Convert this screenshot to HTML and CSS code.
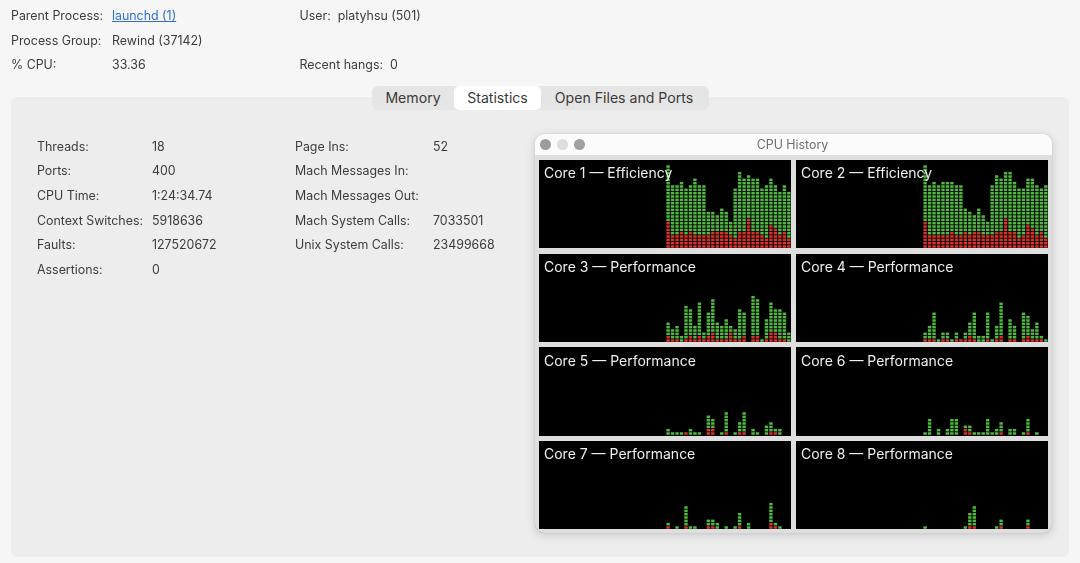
FILE: index.html
```html
<!DOCTYPE html>
<html lang="en">
<head>
<meta charset="utf-8">
<title>Activity Monitor</title>
<link rel="stylesheet" href="styles.css">
</head>
<body>
<div class="page">
  <header class="info">
    <span>Parent Process:</span><a class="link" href="#">launchd (1)</a><span class="pair">User:<b>platyhsu (501)</b></span>
    <span>Process Group:</span><span>Rewind (37142)</span><span></span>
    <span>% CPU:</span><span>33.36</span><span class="pair">Recent hangs:<b>0</b></span>
  </header>
  <main class="panel">
    <nav class="tabs">
      <span class="tab tab-memory">Memory</span>
      <span class="tab tab-active">Statistics</span>
      <span class="tab tab-files">Open Files and Ports</span>
    </nav>
    <div class="content">
      <div class="stats">
        <dl class="stat-col stat-col-a">
          <dt>Threads:</dt><dd>18</dd>
          <dt>Ports:</dt><dd>400</dd>
          <dt>CPU Time:</dt><dd>1:24:34.74</dd>
          <dt>Context Switches:</dt><dd>5918636</dd>
          <dt>Faults:</dt><dd>127520672</dd>
          <dt>Assertions:</dt><dd>0</dd>
        </dl>
        <dl class="stat-col stat-col-b">
          <dt>Page Ins:</dt><dd>52</dd>
          <dt>Mach Messages In:</dt><dd></dd>
          <dt>Mach Messages Out:</dt><dd></dd>
          <dt>Mach System Calls:</dt><dd>7033501</dd>
          <dt>Unix System Calls:</dt><dd>23499668</dd>
        </dl>
      </div>
      <section class="window">
        <div class="titlebar">
          <span class="light light-a"></span>
          <span class="light light-b"></span>
          <span class="light light-c"></span>
          <span class="title">CPU History</span>
        </div>
        <div class="cores">
          <div class="core"><span class="core-label">Core 1 — Efficiency</span><div class="chart"></div></div>
          <div class="core"><span class="core-label">Core 2 — Efficiency</span><div class="chart"></div></div>
          <div class="core"><span class="core-label">Core 3 — Performance</span><div class="chart"></div></div>
          <div class="core"><span class="core-label">Core 4 — Performance</span><div class="chart"></div></div>
          <div class="core"><span class="core-label">Core 5 — Performance</span><div class="chart"></div></div>
          <div class="core"><span class="core-label">Core 6 — Performance</span><div class="chart"></div></div>
          <div class="core"><span class="core-label">Core 7 — Performance</span><div class="chart"></div></div>
          <div class="core"><span class="core-label">Core 8 — Performance</span><div class="chart"></div></div>
        </div>
      </section>
    </div>
  </main>
</div>
<script src="script.js"></script>
</body>
</html>
```
FILE: styles.css
```css
* { box-sizing: border-box; }
html, body { margin: 0; height: 100%; background: #f6f6f6; overflow: hidden; }
.page {
  width: 1080px;
  height: 563px;
  padding: 3.5px 11px 0;
  font-family: Inter, "Liberation Sans", sans-serif;
  font-size: 12.4px;
  color: #3c3c3c;
  filter: blur(0.4px);
}
.info {
  display: grid;
  grid-template-columns: 101px 187.5px 1fr;
  grid-auto-rows: 24.5px;
  align-items: center;
}
.link { color: #2f6ed6; text-decoration: underline; }
.pair b { font-weight: 400; margin-left: 7px; }
.panel {
  height: 460px;
  margin-top: 20px;
  background: #ededed;
  border-radius: 6px;
}
.tabs {
  display: flex;
  width: 337px;
  height: 24px;
  position: relative;
  top: -11px;
  margin-left: 361px;
  background: #e5e5e5;
  border-radius: 6px;
  font-size: 14.1px;
  color: #3a3a3a;
}
.tab { display: flex; align-items: center; justify-content: center; padding-bottom: 1px; }
.tab-memory { width: 82px; }
.tab-active { width: 87px; background: #fff; border-radius: 5px; }
.tab-files { flex: 1; padding-right: 2px; }
.content {
  display: flex;
  justify-content: space-between;
  margin-top: 13px;
  padding: 0 17px 0 26px;
}
.stats { display: flex; }
.stat-col {
  display: grid;
  grid-auto-rows: 24.6px;
  align-items: center;
  align-content: start;
  margin: 0;
}
.stat-col dt, .stat-col dd { margin: 0; }
.stat-col-a { grid-template-columns: 115px 143px; }
.stat-col-b { grid-template-columns: 138px 1fr; }
.window {
  width: 517px;
  height: 399px;
  background: #dedede;
  border-radius: 9px;
  overflow: hidden;
  box-shadow: 0 2px 10px rgba(0, 0, 0, 0.16), 0 0 1px rgba(0, 0, 0, 0.25);
}
.titlebar {
  display: flex;
  align-items: center;
  height: 21px;
  padding-left: 5px;
  gap: 6px;
  background: #fbfbfb;
  position: relative;
}
.light { width: 11px; height: 11px; border-radius: 50%; }
.light-a { background: #9b9b9b; }
.light-b { background: #dedede; }
.light-c { background: #a0a0a0; }
.title {
  position: absolute;
  left: 0;
  right: 2px;
  text-align: center;
  color: #6f6f6f;
}
.cores {
  display: grid;
  grid-template-columns: 252px 252px;
  grid-template-rows: repeat(4, 88.4px);
  gap: 5.3px 5px;
  padding: 5px 4px 0;
}
.core {
  position: relative;
  background: #000;
}
.core-label {
  position: absolute;
  z-index: 1;
  left: 5px;
  top: 4.4px;
  color: #efefef;
  font-size: 14px;
  line-height: 18px;
  white-space: nowrap;
}
.chart { position: absolute; right: 0; bottom: 0; width: 125.2px; height: 88.4px; }
.chart svg { display: block; width: 100%; height: 100%; }
.on-green { fill: #52b842; }
.on-red { fill: #d8332b; }
```
FILE: script.js
```js
var CORES = [
  { t: [25,19,19,20,18,19,21,19,19,11,11,10,12,11,8,18,23,21,22,21,21,18,19,21,19,17,19,17],
    r: [8,4,4,5,4,5,4,4,4,4,5,5,5,5,4,3,5,5,9,5,5,4,3,7,6,4,5,3] },
  { t: [25,19,20,19,20,20,20,19,19,12,11,10,12,10,8,19,22,21,23,23,20,18,18,21,21,19,18,19],
    r: [8,4,4,4,4,4,5,4,4,5,4,5,5,4,4,4,5,5,9,5,5,3,4,7,6,4,5,3] },
  { t: [6,4,5,2,11,10,5,12,3,9,13,6,5,7,5,4,10,9,0,14,13,1,7,12,10,10,9,3],
    r: [2,1,1,0,1,2,1,2,1,2,3,1,1,1,3,1,1,2,0,2,2,0,1,3,3,1,1,0] },
  { t: [3,5,9,1,3,3,1,3,1,3,6,9,2,2,9,1,5,12,0,7,5,0,9,8,4,6,2,1],
    r: [1,1,1,0,1,1,0,1,1,1,2,1,0,0,1,0,1,2,0,1,1,0,1,2,1,1,1,0] },
  { t: [2,1,1,1,1,2,1,1,0,6,5,0,1,7,0,1,4,7,0,2,1,0,3,4,2,2,0,0],
    r: [0,0,0,0,1,0,0,0,0,2,2,0,0,1,0,0,1,1,0,0,0,0,0,1,1,0,0,0] },
  { t: [1,5,0,2,0,2,5,5,0,3,3,1,1,1,5,1,2,4,0,2,2,0,1,5,0,1,0,0],
    r: [0,0,0,0,0,0,0,0,0,2,1,0,0,0,0,0,0,1,0,0,0,0,0,1,0,0,0,0] },
  { t: [2,0,1,0,7,1,1,0,0,3,3,2,0,1,0,1,5,0,2,0,0,0,0,8,2,1,0,0],
    r: [1,0,0,0,1,0,0,0,0,1,1,0,0,0,0,0,1,0,0,0,0,0,0,2,1,0,0,0] },
  { t: [1,0,0,0,0,0,0,0,0,1,5,7,0,0,0,0,1,3,0,0,0,0,0,3,0,0,0,0],
    r: [0,0,0,0,0,0,0,0,0,0,1,1,0,0,0,0,0,1,0,0,0,0,0,1,0,0,0,0] }
];
var NS = "http://www.w3.org/2000/svg";
var PITCH_X = 125.2 / 28;
var PITCH_Y = 10 / 3;
document.querySelectorAll(".chart").forEach(function (chart, i) {
  var svg = document.createElementNS(NS, "svg");
  svg.setAttribute("viewBox", "0 0 125.2 88.4");
  CORES[i].t.forEach(function (total, col) {
    for (var row = 0; row < total; row++) {
      var rect = document.createElementNS(NS, "rect");
      rect.setAttribute("x", (col * PITCH_X + 0.4).toFixed(2));
      rect.setAttribute("y", (88.2 - (row + 1) * PITCH_Y + 0.4).toFixed(2));
      rect.setAttribute("width", "3.4");
      rect.setAttribute("height", "2.5");
      rect.setAttribute("class", row < CORES[i].r[col] ? "on-red" : "on-green");
      svg.appendChild(rect);
    }
  });
  chart.appendChild(svg);
});
```
